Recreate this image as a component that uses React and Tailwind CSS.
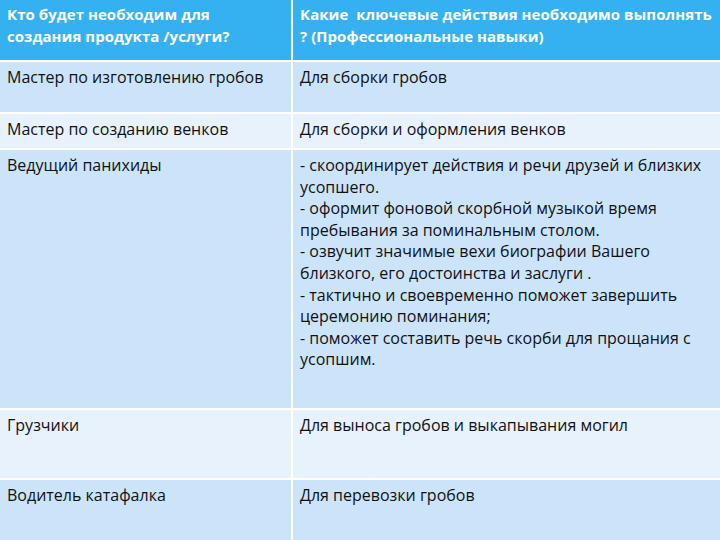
const rows = [
  {
    who: 'Мастер по изготовлению гробов',
    what: ['Для сборки гробов'],
    h: 'h-[50px]',
    bg: 'bg-[#cce4f9]',
  },
  {
    who: 'Мастер по созданию венков',
    what: ['Для сборки и оформления венков'],
    h: 'h-[34px]',
    bg: 'bg-[#e7f2fd]',
  },
  {
    who: 'Ведущий панихиды',
    what: [
      '- скоординирует действия и речи друзей и близких',
      'усопшего.',
      '- оформит фоновой скорбной музыкой время',
      'пребывания за поминальным столом.',
      '- озвучит значимые вехи биографии Вашего',
      'близкого, его достоинства и заслуги .',
      '- тактично и своевременно поможет завершить',
      'церемонию поминания;',
      '- поможет составить речь скорби для прощания с',
      'усопшим.',
    ],
    h: 'h-[258px]',
    bg: 'bg-[#cce4f9]',
  },
  {
    who: 'Грузчики',
    what: ['Для выноса гробов и выкапывания могил'],
    h: 'h-[68px]',
    bg: 'bg-[#e7f2fd]',
  },
  {
    who: 'Водитель катафалка',
    what: ['Для перевозки гробов'],
    h: 'h-[62px]',
    bg: 'bg-[#cce4f9]',
  },
];

export default function App() {
  return (
    <div
      className="w-[720px] h-[540px] overflow-hidden bg-white text-[16px] leading-[21.6px] text-[#111]"
      style={{ fontFamily: '"Open Sans", "Noto Sans", sans-serif' }}
    >
      <div className="grid grid-cols-[291px_427px] gap-[2px]">
        <div className="h-[60px] bg-[#35b1f1] px-[7px] pt-[4px] font-bold text-white text-[15px] tracking-[0.05px] whitespace-nowrap">
          Кто будет необходим для
          <br />
          создания продукта /услуги?
        </div>
        <div className="h-[60px] bg-[#35b1f1] pl-[7px] pt-[4px] font-bold text-white text-[15px] tracking-[0.05px] whitespace-nowrap">
          Какие&nbsp; ключевые действия необходимо выполнять
          <br />? (Профессиональные навыки)
        </div>
        {rows.map((r, i) => (
          <div key={i} className="contents">
            <div className={`${r.h} ${r.bg} px-[7px] pt-[5px] tracking-[0px] whitespace-nowrap`}>{r.who}</div>
            <div className={`${r.h} ${r.bg} pl-[7px] pt-[5px] tracking-[0px] whitespace-nowrap`}>
              {r.what.map((t, j) => (
                <div key={j}>{t}</div>
              ))}
            </div>
          </div>
        ))}
      </div>
    </div>
  );
}
